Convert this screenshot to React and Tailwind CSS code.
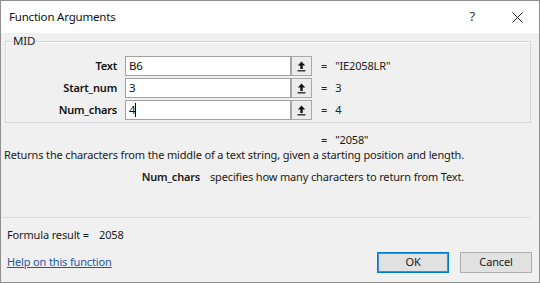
import React from 'react'

const font = { fontFamily: '"Noto Sans", "Open Sans", sans-serif' }

function RefButton() {
  return (
    <div className="w-[21px] h-[20px] border border-[#a9a9a9] bg-[#ececec] flex items-center justify-center">
      <svg width="9" height="11" viewBox="0 0 9 11">
        <path d="M4.5 0.5 L0.8 4.6 H3.3 V8 H5.7 V4.6 H8.2 Z" fill="#111" />
        <rect x="0.5" y="9.2" width="8" height="1.2" fill="#111" />
      </svg>
    </div>
  )
}

function ArgRow({ label, value, result, cursor }) {
  return (
    <div className="flex items-center h-[20px]">
      <div className="w-[111px] text-right font-semibold text-[11px] tracking-[-0.2px] text-[#111]">{label}</div>
      <div className="ml-[8px] w-[166px] h-[20px] bg-white border border-[#a0a0a0] flex items-center pl-[3px] text-[11.5px] text-[#111]">
        {value}
        {cursor && <span className="w-px h-[14px] bg-black" />}
      </div>
      <RefButton />
      <div className="ml-[9px] text-[11px] text-[#222]">=</div>
      <div className="ml-[8px] text-[11px] tracking-[-0.15px] text-[#222]">{result}</div>
    </div>
  )
}

export default function App() {
  return (
    <div className="w-[540px] h-[283px] border border-[#8e8e8e] bg-[#f0f0f0] flex flex-col text-[#1a1a1a] text-[11px] tracking-[-0.15px]" style={font}>
      {/* title bar */}
      <div className="h-[32px] bg-white flex items-center pl-[8px] pr-[16px] shrink-0">
        <span className="text-[11.5px] tracking-[-0.2px] text-[#111]">Function Arguments</span>
        <span className="ml-auto text-[13px] text-[#333] mr-[37px]">?</span>
        <svg width="11" height="11" viewBox="0 0 11 11">
          <path d="M0.5 0.5 L10.5 10.5 M10.5 0.5 L0.5 10.5" stroke="#222" strokeWidth="1" />
        </svg>
      </div>

      {/* argument group */}
      <div className="relative mt-[8px] ml-[4px] w-[526px] border border-[#d6d6d6] shadow-[inset_1px_1px_0_#ffffff] pt-[14px] pb-[2px] flex flex-col gap-[2px]">
        <span className="absolute -top-[9px] left-[6px] px-[1px] bg-[#f0f0f0] text-[11.5px] leading-[16px]">MID</span>
        <ArgRow label="Text" value="B6" result={'"IE2058LR"'} />
        <ArgRow label="Start_num" value="3" result="3" />
        <ArgRow label="Num_chars" value="4" result="4" cursor />
      </div>

      <div className="mt-[10px] h-[14px] leading-[14px] pl-[320px] flex">
        <span>=</span>
        <span className="ml-[8px]">"2058"</span>
      </div>
      <div className="mt-[1px] h-[14px] leading-[14px] pl-[3px]">
        Returns the characters from the middle of a text string, given a starting position and length.
      </div>
      <div className="mt-[8px] h-[14px] leading-[14px] flex">
        <span className="w-[199px] text-right font-semibold tracking-[-0.2px]">Num_chars</span>
        <span className="ml-[10px]">specifies how many characters to return from Text.</span>
      </div>

      <div className="mt-[33px] mx-[2px] w-[528px] border-t border-[#dcdcdc] h-px bg-white" />

      <div className="mt-[10px] h-[14px] leading-[14px] pl-[6px] flex">
        <span>Formula result =</span>
        <span className="ml-[10px]">2058</span>
      </div>

      <div className="mt-[10px] flex items-center pl-[6px] pr-[7px]">
        <a href="#" className="text-[#1c57a5] underline">Help on this function</a>
        <div className="ml-auto flex gap-[11px]">
          <button className="w-[72px] h-[21px] bg-[#e1e1e1] border border-[#0078d7] shadow-[inset_0_0_0_1px_#3d8fdc]">OK</button>
          <button className="w-[72px] h-[21px] bg-[#e1e1e1] border border-[#adadad]">Cancel</button>
        </div>
      </div>
    </div>
  )
}
